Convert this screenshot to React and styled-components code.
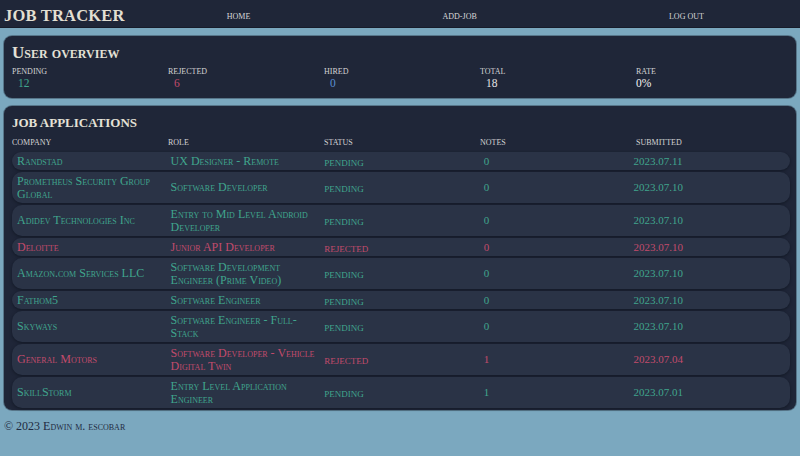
import React from 'react'
import styled, { createGlobalStyle } from 'styled-components'

const GlobalStyle = createGlobalStyle`
  html, body {
    margin: 0;
    padding: 0;
    background: #7ba8bf;
    font-family: "Liberation Serif", "Times New Roman", serif;
  }
`

const Page = styled.div`
  width: 800px;
  min-height: 456px;
  background: #7ba8bf;
`

const TopBar = styled.header`
  display: flex;
  align-items: center;
  height: 28px;
  padding: 5px 0 0 4px;
  box-sizing: border-box;
  background: #1f2638;
  border-bottom: 1px solid #171c2a;
`

const Logo = styled.h1`
  margin: 0;
  font-size: 16.5px;
  line-height: 20px;
  font-weight: 700;
  letter-spacing: 0.2px;
  color: #e2dfd2;
  white-space: nowrap;
`

const Nav = styled.nav`
  flex: 1;
  display: flex;
  justify-content: space-around;
  padding: 1px 0 0 6px;
`

const NavLink = styled.a`
  font-size: 8px;
  line-height: 10px;
  text-transform: uppercase;
  color: #d8d8d8;
  text-decoration: none;
`

const Main = styled.main`
  display: flex;
  flex-direction: column;
  gap: 8px;
  padding: 8px 4px 0;
`

const Card = styled.section`
  background: #1f2638;
  border-radius: 8px;
  padding: ${p => p.$pad};
  box-shadow: 0 0 0 1px rgba(20, 26, 40, 0.35);
`

const OverviewTitle = styled.h2`
  margin: 0 0 4px;
  font-size: 17px;
  line-height: 20px;
  font-weight: 700;
  font-variant: small-caps;
  color: #e4e1d6;
`

const SectionTitle = styled.h2`
  margin: 0 0 7px;
  font-size: 13px;
  line-height: 16px;
  font-weight: 700;
  text-transform: uppercase;
  color: #e4e1d6;
`

const Columns = styled.div`
  display: grid;
  grid-template-columns: repeat(5, 1fr);
`

const Stat = styled.div`
  display: flex;
  flex-direction: column;
`

const Label = styled.span`
  font-size: 8px;
  line-height: 10px;
  text-transform: uppercase;
  color: #d4d4d4;
`

const Value = styled.span`
  font-size: 11.5px;
  line-height: 13px;
  padding-left: ${p => (p.$flush ? '0' : '6px')};
  color: ${p => p.$color};
`

const HeadCell = styled.span`
  font-size: 8px;
  line-height: 10px;
  text-transform: uppercase;
  color: #d4d4d4;
`

const Rows = styled.div`
  display: flex;
  flex-direction: column;
  gap: 2px;
  margin-top: 4px;
`

const Row = styled.div`
  display: grid;
  grid-template-columns: repeat(5, 1fr);
  align-items: center;
  margin-right: 2px;
  padding: 2.5px 5px;
  border-radius: 10px;
  background: #2a3346;
  box-shadow: 0 1px 3px rgba(10, 14, 24, 0.55);
  color: ${p => (p.$rejected ? '#c24b6c' : '#40a58d')};
`

const Cell = styled.span`
  font-size: ${p => (p.$caps ? '12px' : '11px')};
  line-height: 13px;
  font-variant: ${p => (p.$caps ? 'small-caps' : 'normal')};
  padding-left: ${p => p.$indent || 0}px;
  padding-right: 4px;
`

const Status = styled.span`
  font-size: 13px;
  line-height: 13px;
  font-variant: small-caps;
`

const Footer = styled.footer`
  padding: 8px 4px;
  font-size: 12px;
  line-height: 16px;
  font-variant: small-caps;
  color: #1f2b42;
`

const stats = [
  { label: 'pending', value: '12', color: '#40a58d' },
  { label: 'rejected', value: '6', color: '#c24b6c' },
  { label: 'hired', value: '0', color: '#5b90d2' },
  { label: 'total', value: '18', color: '#e2e2e2' },
  { label: 'rate', value: '0%', color: '#f2f2f2', flush: true }
]

const jobs = [
  { company: 'Randstad', role: 'UX Designer - Remote', status: 'pending', notes: 0, date: '2023.07.11' },
  { company: 'Prometheus Security Group Global', role: 'Software Developer', status: 'pending', notes: 0, date: '2023.07.10' },
  { company: 'Adidev Technologies Inc', role: 'Entry to Mid Level Android Developer', status: 'pending', notes: 0, date: '2023.07.10' },
  { company: 'Deloitte', role: 'Junior API Developer', status: 'rejected', notes: 0, date: '2023.07.10' },
  { company: 'Amazon.com Services LLC', role: 'Software Development Engineer (Prime Video)', status: 'pending', notes: 0, date: '2023.07.10' },
  { company: 'Fathom5', role: 'Software Engineer', status: 'pending', notes: 0, date: '2023.07.10' },
  { company: 'Skyways', role: 'Software Engineer - Full-Stack', status: 'pending', notes: 0, date: '2023.07.10' },
  { company: 'General Motors', role: 'Software Developer - Vehicle Digital Twin', status: 'rejected', notes: 1, date: '2023.07.04' },
  { company: 'SkillStorm', role: 'Entry Level Application Engineer', status: 'pending', notes: 1, date: '2023.07.01' }
]

const App = () => {
  return (
    <Page>
      <GlobalStyle />
      <TopBar>
        <Logo>JOB TRACKER</Logo>
        <Nav>
          <NavLink href="#">Home</NavLink>
          <NavLink href="#">Add-job</NavLink>
          <NavLink href="#">Log out</NavLink>
        </Nav>
      </TopBar>

      <Main>
        <Card $pad="7px 4px 8px 8px">
          <OverviewTitle>User overview</OverviewTitle>
          <Columns>
            {stats.map(s => (
              <Stat key={s.label}>
                <Label>{s.label}</Label>
                <Value $color={s.color} $flush={s.flush}>{s.value}</Value>
              </Stat>
            ))}
          </Columns>
        </Card>

        <Card $pad="9px 4px 2px 8px">
          <SectionTitle>Job applications</SectionTitle>
          <Columns>
            <HeadCell>company</HeadCell>
            <HeadCell>role</HeadCell>
            <HeadCell>status</HeadCell>
            <HeadCell>notes</HeadCell>
            <HeadCell>submitted</HeadCell>
          </Columns>
          <Rows>
            {jobs.map(job => (
              <Row key={job.company} $rejected={job.status === 'rejected'}>
                <Cell $caps>{job.company}</Cell>
                <Cell $caps>{job.role}</Cell>
                <Status>{job.status}</Status>
                <Cell $indent={6}>{job.notes}</Cell>
                <Cell $indent={2}>{job.date}</Cell>
              </Row>
            ))}
          </Rows>
        </Card>
      </Main>

      <Footer>© 2023 Edwin m. escobar</Footer>
    </Page>
  )
}

export default App
